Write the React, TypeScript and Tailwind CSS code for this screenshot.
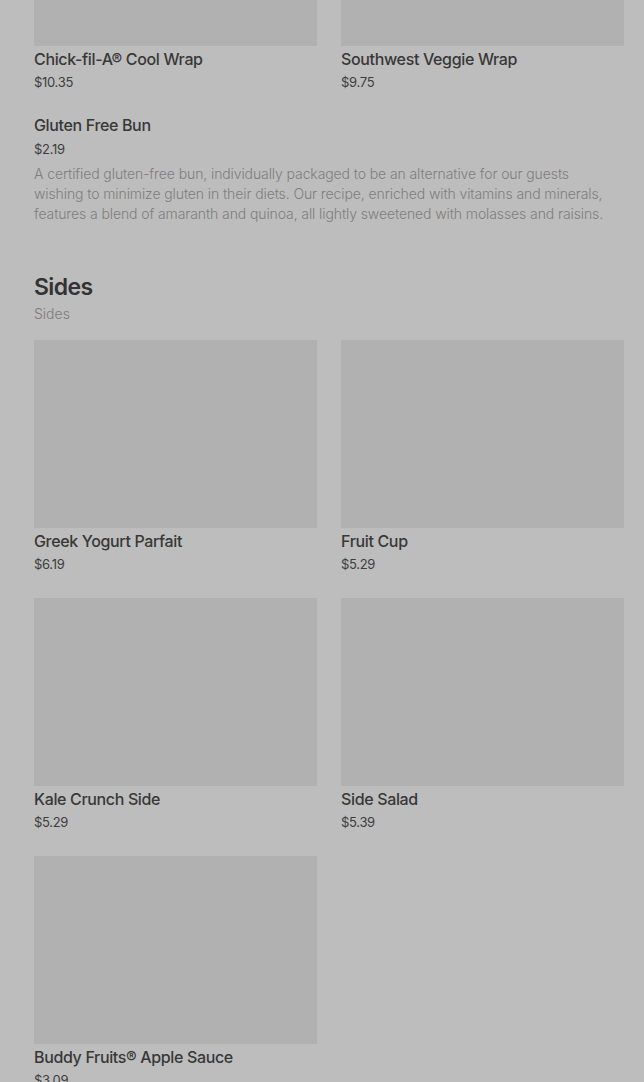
import React from "react";

const font = { fontFamily: "Inter, 'Noto Sans', sans-serif" };

function Card({ name, price, top }: { name: string; price: string; top?: boolean }) {
  return (
    <div className="flex flex-col">
      <div className={top ? "h-[46px] bg-[#b1b1b1]" : "h-[188px] bg-[#b1b1b1]"} />
      <div className="mt-[1px] text-[16px] leading-[24px] font-medium text-[#383838] tracking-[-0.35px]">{name}</div>
      <div className="mt-[1px] text-[13px] leading-[20px] text-[#3d3d3d] tracking-[-0.3px]">{price}</div>
    </div>
  );
}

export default function App() {
  return (
    <div className="min-h-[1082px] w-full bg-[#bdbdbd] overflow-hidden" style={font}>
      <div className="pl-[34px] pr-[20px]">
        <div className="grid grid-cols-2 gap-x-[24px]">
          <Card top name="Chick-fil-A® Cool Wrap" price="$10.35" />
          <Card top name="Southwest Veggie Wrap" price="$9.75" />
        </div>
        <div className="mt-[21px]">
          <div className="text-[16px] leading-[24px] font-medium text-[#383838] tracking-[-0.35px]">Gluten Free Bun</div>
          <div className="mt-[2px] text-[13px] leading-[20px] text-[#3d3d3d] tracking-[-0.3px]">$2.19</div>
          <p className="mt-[5px] text-[14px] leading-[20px] font-light text-[#7e7e7e] tracking-[-0.1px] pr-[12px]">
            A certified gluten-free bun, individually packaged to be an alternative for our guests wishing to minimize gluten in their diets. Our recipe, enriched with vitamins and minerals, features a blend of amaranth and quinoa, all lightly sweetened with molasses and raisins.
          </p>
        </div>
        <div className="mt-[47px]">
          <h2 className="text-[23px] leading-[32px] font-semibold text-[#333333] tracking-[-0.6px]">Sides</h2>
          <div className="mt-[1px] text-[14px] leading-[20px] font-light text-[#7a7a7a]">Sides</div>
        </div>
        <div className="mt-[16px] grid grid-cols-2 gap-x-[24px] gap-y-[24px]">
          <Card name="Greek Yogurt Parfait" price="$6.19" />
          <Card name="Fruit Cup" price="$5.29" />
          <Card name="Kale Crunch Side" price="$5.29" />
          <Card name="Side Salad" price="$5.39" />
          <Card name="Buddy Fruits® Apple Sauce" price="$3.09" />
        </div>
      </div>
    </div>
  );
}
